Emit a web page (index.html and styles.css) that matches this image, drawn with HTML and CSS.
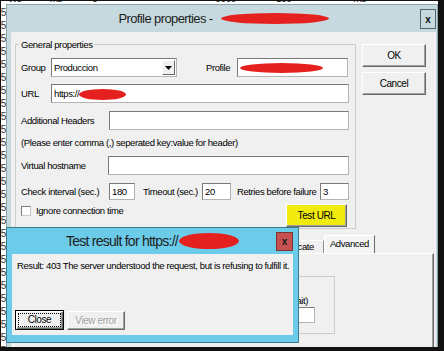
FILE: index.html
```html
<!DOCTYPE html>
<html lang="en">
<head>
  <meta charset="UTF-8" />
  <meta name="viewport" content="width=device-width, initial-scale=1.0"/>
  <title>Profile properties</title>
  <link rel="stylesheet" href="styles.css">
</head>
<body>
<div class="desktop">
  <!-- bits of the window behind the dialog -->
  <div class="bg-top">
    <div class="bg-top-text">
      <span class="t1">Ws</span><span class="t2">ms</span><span class="t3">5</span><span class="t4">0000</span><span class="t5">100</span><span class="t6">ms</span>
    </div>
  </div>
  <div class="bg-left">
    <div>5</div><div>5</div><div>5</div><div>5</div><div>5</div><div>5</div><div>5</div>
    <div>5</div><div>5</div><div>5</div><div>5</div><div>5</div><div>5</div><div>5</div>
    <div>5</div><div>5</div><div>5</div><div>5</div><div>5</div><div>5</div><div>5</div>
    <div>5</div><div>5</div><div>5</div><div>5</div><div>5</div><div>5</div>
  </div>

  <div class="dlg">
    <div class="dlg-title">
      <div class="ttl">Profile properties - <span class="scribble sc-title"></span></div>
      <button class="dlg-x">x</button>
    </div>
    <div class="dlg-body">
      <div class="top-row">
        <fieldset class="grp">
          <legend>General properties</legend>
          <div class="row">
            <label class="lbl w30">Group</label>
            <div class="select">
              <span>Produccion</span>
              <span class="drop"><svg width="7" height="4" viewBox="0 0 7 4"><path d="M0 0h7L3.5 4z" fill="#000"/></svg></span>
            </div>
            <label class="lbl lbl-profile">Profile</label>
            <div class="field f-profile"><span class="scribble sc-profile"></span></div>
          </div>
          <div class="row">
            <label class="lbl w30">URL</label>
            <div class="field f-url">https://<span class="scribble sc-url"></span></div>
          </div>
          <div class="row row-gap8">
            <label class="lbl w88">Additional Headers</label>
            <input class="field f-headers" type="text">
          </div>
          <div class="note">(Please enter comma (,) seperated key:value for header)</div>
          <div class="row">
            <label class="lbl w87">Virtual hostname</label>
            <input class="field f-host" type="text">
          </div>
          <div class="row row-nums">
            <label class="lbl w88">Check interval (sec.)</label>
            <input class="field f-interval" type="text" value="180">
            <label class="lbl lbl-timeout">Timeout (sec.)</label>
            <input class="field f-num" type="text" value="20">
            <label class="lbl lbl-retries">Retries before failure</label>
            <input class="field f-num" type="text" value="3">
          </div>
          <div class="row row-last">
            <input class="chk" type="checkbox">
            <label class="lbl chk-lbl">Ignore connection time</label>
            <button class="btn btn-test">Test URL</button>
          </div>
        </fieldset>
        <div class="side">
          <button class="btn btn-side">OK</button>
          <button class="btn btn-side">Cancel</button>
        </div>
      </div>

      <div class="tabs">
        <div class="tab">General</div>
        <div class="tab">Alerts</div>
        <div class="tab">Certificate</div>
        <div class="tab on">Advanced</div>
      </div>
      <div class="panel">
        <fieldset class="sub">
          <label class="lbl sub-lbl">Delay before retry (sec., 0 = no wait)</label>
          <input class="field sub-inp" type="text">
        </fieldset>
      </div>
    </div>
  </div>

  <div class="popup">
    <div class="pop-title">
      <div class="pop-ttl">Test result for https://<span class="scribble sc-pop"></span></div>
      <button class="pop-x">x</button>
    </div>
    <div class="pop-body">
      <p class="result">Result: 403 The server understood the request, but is refusing to fulfill it.</p>
      <div class="pop-btns">
        <button class="btn btn-close"><span>Close</span></button>
        <button class="btn btn-view" disabled>View error</button>
      </div>
    </div>
  </div>
</div>
</body>
</html>
```

FILE: styles.css
```css
* {
  box-sizing: border-box;
}

body {
  margin: 0;
  width: 444px;
  height: 351px;
  overflow: hidden;
  background-color: #111;
  font-family: "Liberation Sans", Arial, sans-serif;
  font-size: 9.5px;
  letter-spacing: -0.4px;
  color: #000;
}

.desktop {
  position: relative;
  margin: 1px 0 0 1px;
  width: 437px;
  height: 346px;
  overflow: hidden;
  background-color: #fff;
  display: grid;
  grid-template-columns: 5px 1fr;
  grid-template-rows: 3px 1fr;
}

/* background window remnants */
.bg-top {
  grid-column: 1 / 3;
  overflow: hidden;
}

.bg-top-text {
  display: flex;
  margin-top: -7px;
  font-size: 10px;
  line-height: 10px;
  color: #222;
}

.bg-top-text .t1 { margin-left: 7px; }
.bg-top-text .t2 { margin-left: 28px; }
.bg-top-text .t3 { margin-left: 30px; }
.bg-top-text .t4 { margin-left: 118px; }
.bg-top-text .t5 { margin-left: 40px; }
.bg-top-text .t6 { margin-left: 62px; }

.bg-left {
  overflow: hidden;
  padding-top: 2px;
}

.bg-left div {
  display: flex;
  justify-content: flex-end;
  height: 13px;
  line-height: 13px;
  font-size: 10px;
  color: #333;
}

/* main dialog */
.dlg {
  display: flex;
  flex-direction: column;
  background-color: #c6d9df;
  border: 1px solid #8ea3aa;
  border-bottom: 0;
  padding: 0 1px 0 4px;
  min-width: 0;
}

.dlg-title {
  height: 27px;
  display: grid;
  grid-template-columns: 1fr auto 1fr;
}

.ttl {
  grid-column: 2;
  align-self: center;
  display: flex;
  align-items: center;
  font-size: 13px;
  letter-spacing: -0.6px;
  color: #1e1e1e;
  white-space: pre;
}

.dlg-x {
  grid-column: 3;
  justify-self: end;
  align-self: start;
  margin-top: 4px;
  width: 16px;
  height: 20px;
  padding: 0;
  border: 1px solid #55656b;
  background-color: #c6d9df;
  font-family: inherit;
  font-size: 10px;
  font-weight: bold;
  color: #111;
}

.scribble {
  display: inline-block;
  background-color: #e5211f;
  border-radius: 50%;
}

.sc-title {
  width: 108px;
  height: 11px;
  margin-left: 5px;
}

.dlg-body {
  flex: 1;
  background-color: #f0f0f0;
  padding: 6px 0 0 4px;
}

.top-row {
  display: flex;
  gap: 6px;
  align-items: flex-start;
}

.grp {
  width: 341px;
  min-width: 0;
  margin: 0;
  padding: 7px 5px 1px;
  border: 1px solid #cdcdcd;
}

.grp legend {
  margin-left: -2px;
  padding: 0 2px;
  line-height: 13px;
}

.row {
  display: flex;
  align-items: center;
  height: 19px;
  margin-top: 7px;
}

.grp .row:first-of-type {
  margin-top: 0;
}

.row-gap8 {
  margin-top: 8px;
}

.lbl {
  flex: none;
  white-space: nowrap;
  line-height: 13px;
}

.w30 { width: 30px; }
.w87 { width: 87px; }
.w88 { width: 88px; }

.lbl-profile {
  width: 31px;
  margin-left: 29px;
}

.field {
  flex: none;
  height: 100%;
  margin: 0;
  padding: 0 2px;
  display: flex;
  align-items: center;
  background-color: #fff;
  border: 1px solid;
  border-color: #7a7a7a #b4b4b4 #b4b4b4 #7a7a7a;
  font-family: inherit;
  font-size: inherit;
  letter-spacing: inherit;
  color: #000;
  white-space: nowrap;
  outline: none;
}

.select {
  flex: none;
  width: 126px;
  height: 100%;
  display: flex;
  align-items: center;
  justify-content: space-between;
  padding: 0 1px 0 2px;
  background-color: #fff;
  border: 1px solid;
  border-color: #7a7a7a #b4b4b4 #b4b4b4 #7a7a7a;
}

.drop {
  width: 13px;
  height: 15px;
  display: flex;
  align-items: center;
  justify-content: center;
  background-color: #f0f0f0;
  border: 1px solid;
  border-color: #fff #696969 #696969 #fff;
}

.f-profile { width: 111px; padding-left: 2px; }
.sc-profile { width: 83px; height: 10px; }

.f-url { width: 298px; }
.sc-url { width: 47px; height: 11px; margin-top: 1px; }

.f-headers { width: 240px; }
.f-host { width: 241px; }

.note {
  height: 13px;
  margin-top: 6px;
  line-height: 13px;
}

.row-nums {
  height: 17px;
  margin-top: 8px;
}

.f-interval { width: 26px; }
.f-num { width: 29px; }

.lbl-timeout {
  width: 59px;
  margin-left: 8px;
}

.lbl-retries {
  width: 83px;
  margin-left: 6px;
}

.row-last {
  height: 23px;
  margin-top: 4px;
  align-items: flex-start;
}

.chk {
  appearance: none;
  flex: none;
  width: 10px;
  height: 10px;
  margin: 2px 0 0;
  background-color: #fff;
  border: 1px solid;
  border-color: #7a7a7a #c8c8c8 #c8c8c8 #7a7a7a;
}

.chk-lbl {
  margin-left: 5px;
}

.btn {
  padding: 0;
  font-family: inherit;
  font-size: inherit;
  letter-spacing: inherit;
  color: #000;
  background-color: #f0f0f0;
  border: 1px solid;
  border-color: #fff #696969 #696969 #fff;
  box-shadow: inset -1px -1px #a0a0a0;
}

.btn-test {
  width: 61px;
  height: 23px;
  margin-left: auto;
  margin-right: 3px;
  background-color: #f1ea0f;
  font-size: 10px;
}

.side {
  display: flex;
  flex-direction: column;
  gap: 5px;
  margin-top: 6px;
}

.btn-side {
  width: 64px;
  height: 23px;
  font-size: 10px;
}

/* tabs */
.tabs {
  display: flex;
  justify-content: flex-end;
  align-items: flex-end;
  height: 18px;
  margin-top: 6px;
  padding-right: 61px;
  overflow: hidden;
}

.tab {
  flex: none;
  height: 13px;
  padding: 0 9px;
  line-height: 12px;
  border: 1px solid;
  border-color: #fff #8a8a8a transparent #fff;
  border-bottom: 0;
  white-space: nowrap;
}

.tab.on {
  height: 19px;
  margin-bottom: -1px;
  padding: 2px 5px 0;
  background-color: #f4f4f4;
  border-right-color: #696969;
  position: relative;
  z-index: 1;
}

.panel {
  height: 110px;
  margin: 0 2px 0 -2px;
  padding: 22px 0 0 8px;
  border: 1px solid;
  border-color: #fff #696969 #696969 #fff;
  box-shadow: inset -1px -1px #a0a0a0;
}

.sub {
  width: 313px;
  height: 58px;
  margin: 0;
  padding: 17px 19px 0 0;
  display: flex;
  flex-direction: column;
  align-items: flex-end;
  border: 1px solid #cdcdcd;
}

.sub-lbl {
  margin-right: 7px;
}

.sub-inp {
  width: 120px;
  height: 16px;
}

/* test result popup */
.popup {
  position: absolute;
  left: 5px;
  top: 226px;
  width: 293px;
  height: 116px;
  display: flex;
  flex-direction: column;
  padding: 0 5px 7px;
  background-color: #6ccbe8;
  border: 1px solid #3b7d90;
  z-index: 2;
}

.pop-title {
  height: 26px;
  flex: none;
  display: grid;
  grid-template-columns: 1fr auto 1fr;
}

.pop-ttl {
  grid-column: 2;
  align-self: center;
  display: flex;
  align-items: center;
  font-size: 14px;
  letter-spacing: -0.75px;
  color: #1e1e1e;
  white-space: pre;
}

.sc-pop {
  width: 60px;
  height: 16px;
  margin-left: 1px;
}

.pop-x {
  grid-column: 3;
  justify-self: end;
  align-self: start;
  margin-top: 4px;
  width: 17px;
  height: 19px;
  padding: 0;
  background-color: #c75050;
  border: 1px solid #7f3434;
  font-family: inherit;
  font-size: 10px;
  font-weight: bold;
  color: #1a1a1a;
}

.pop-body {
  flex: 1;
  display: flex;
  flex-direction: column;
  padding: 5px;
  background-color: #f0f0f0;
}

.result {
  margin: 0;
  line-height: 13px;
  white-space: nowrap;
}

.pop-btns {
  display: flex;
  align-items: flex-end;
  gap: 3px;
  margin-top: auto;
  margin-left: -2px;
}

.btn-close {
  width: 49px;
  height: 20px;
  padding: 3px;
  border: 1px solid #000;
  box-shadow: inset 1px 1px #fff, inset -1px -1px #696969, inset -2px -2px #a0a0a0;
  font-size: 10px;
}

.btn-close span {
  display: block;
  height: 100%;
  line-height: 11px;
  outline: 1px dotted #000;
}

.btn-view {
  width: 58px;
  height: 19px;
  font-size: 10px;
  color: #a0a0a0;
  text-shadow: 1px 1px #fff;
}
```
